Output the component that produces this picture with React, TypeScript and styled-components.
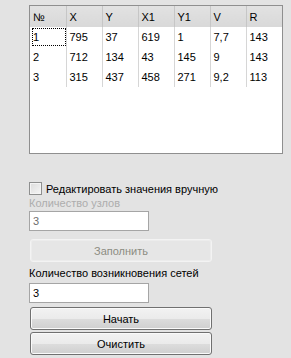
import React from 'react';
import styled, { createGlobalStyle } from 'styled-components';

const GlobalStyle = createGlobalStyle`
  html, body {
    margin: 0;
    padding: 0;
    background: #e3e3e3;
  }
  body {
    font-family: "Liberation Sans", Arial, sans-serif;
    font-size: 11px;
    color: #000;
  }
`;

const Panel = styled.div`
  width: 291px;
  height: 358px;
  overflow: hidden;
  box-sizing: border-box;
  padding: 5px 0 0 29px;
  display: flex;
  flex-direction: column;
  align-items: flex-start;
`;

const GridBox = styled.div`
  width: 254px;
  height: 149px;
  box-sizing: border-box;
  border: 1px solid #8f8f8f;
  background: #fff;
  overflow: hidden;
`;

const Table = styled.table`
  border-collapse: collapse;
  table-layout: fixed;
  width: 252px;
`;

const Th = styled.th`
  width: 36px;
  height: 21px;
  box-sizing: border-box;
  padding: 0 0 0 3px;
  text-align: left;
  font-weight: normal;
  background: linear-gradient(#e2e2e2, #d8d8d8);
  border-right: 1px solid #c6c6c6;
`;

const Td = styled.td<{ $focused?: boolean }>`
  height: 20px;
  box-sizing: border-box;
  padding: 0 0 0 2px;
  border-right: 1px solid #d6d6d6;

  span {
    display: block;
    height: 18px;
    line-height: 18px;
    padding-left: 1px;
    outline: ${(p) => (p.$focused ? '1px dotted #000' : 'none')};
    outline-offset: -1px;
  }
`;

const CheckRow = styled.label`
  margin-top: 28px;
  display: flex;
  align-items: center;
  height: 13px;
  gap: 4px;
`;

const CheckBox = styled.span`
  width: 13px;
  height: 13px;
  box-sizing: border-box;
  border: 1px solid #8e8f8f;
  background: linear-gradient(135deg, #dcdcdc, #f6f6f6);
  box-shadow: inset 0 0 0 1px #f4f4f4;
`;

const Caption = styled.div<{ $disabled?: boolean; $gap: number }>`
  margin-top: ${(p) => p.$gap}px;
  line-height: 13px;
  color: ${(p) => (p.$disabled ? '#adadad' : '#000')};
`;

const Input = styled.div<{ $gap: number; $dim?: boolean }>`
  margin-top: ${(p) => p.$gap}px;
  width: 120px;
  height: 20px;
  box-sizing: border-box;
  border: 1px solid #a5a5a5;
  background: #fff;
  padding-left: 3px;
  line-height: 18px;
  color: ${(p) => (p.$dim ? '#6d6d6d' : '#000')};
`;

const Button = styled.button<{ $gap: number }>`
  margin: ${(p) => p.$gap}px 0 0 1px;
  width: 182px;
  height: 23px;
  box-sizing: border-box;
  font-family: inherit;
  font-size: 11px;
  padding: 0;
  border: 1px solid #707070;
  border-radius: 3px;
  color: #000;
  background: linear-gradient(#f2f2f2 0%, #ebebeb 50%, #dddddd 51%, #cfcfcf 100%);
  box-shadow: inset 0 0 0 1px #fafafa;

  &:disabled {
    border-color: #f3f3f3;
    background: #e6e6e6;
    box-shadow: inset 0 0 0 1px #ececec;
    color: #8c8c82;
  }
`;

const columns = ['№', 'X', 'Y', 'X1', 'Y1', 'V', 'R'];

const rows = [
  ['1', '795', '37', '619', '1', '7,7', '143'],
  ['2', '712', '134', '43', '145', '9', '143'],
  ['3', '315', '437', '458', '271', '9,2', '113'],
];

function App() {
  return (
    <>
      <GlobalStyle />
      <Panel>
        <GridBox>
          <Table>
            <thead>
              <tr>
                {columns.map((c) => (
                  <Th key={c}>{c}</Th>
                ))}
              </tr>
            </thead>
            <tbody>
              {rows.map((row, ri) => (
                <tr key={ri}>
                  {row.map((cell, ci) => (
                    <Td key={ci} $focused={ri === 0 && ci === 0}>
                      <span>{cell}</span>
                    </Td>
                  ))}
                </tr>
              ))}
            </tbody>
          </Table>
        </GridBox>

        <CheckRow>
          <CheckBox />
          Редактировать значения вручную
        </CheckRow>
        <Caption $disabled $gap={2}>Количество узлов</Caption>
        <Input $gap={1} $dim>3</Input>
        <Button $gap={8} disabled>Заполнить</Button>

        <Caption $gap={5}>Количество возникновения сетей</Caption>
        <Input $gap={3}>3</Input>
        <Button $gap={4}>Начать</Button>
        <Button $gap={2}>Очистить</Button>
      </Panel>
    </>
  );
}

export default App;
